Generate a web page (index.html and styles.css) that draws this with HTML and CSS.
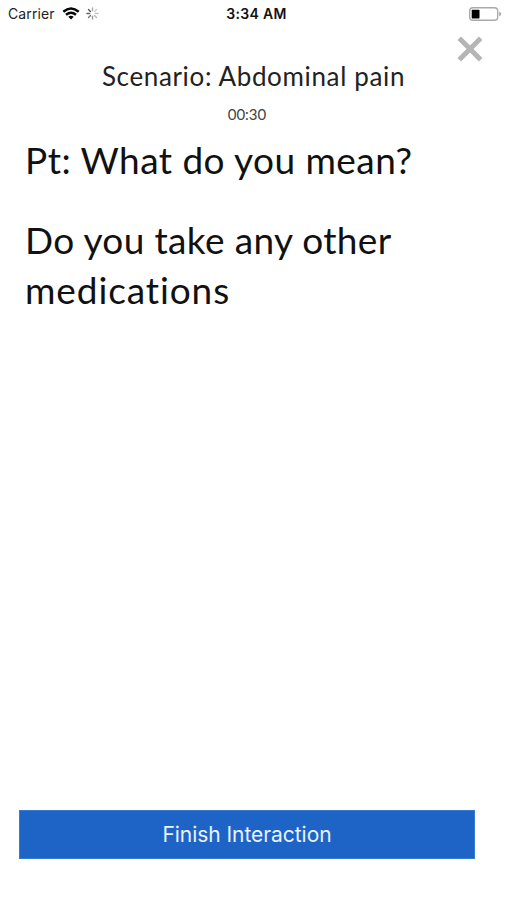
FILE: index.html
```html
<!DOCTYPE html>
<html lang="en">
<head>
<meta charset="utf-8">
<title>Scenario</title>
<link rel="stylesheet" href="styles.css">
</head>
<body>
<div class="screen">
  <header class="status">
    <div class="status-left">
      <span class="carrier">Carrier</span>
      <svg class="wifi" width="18" height="13" viewBox="0 0 18 13" fill="none" stroke="#050505" stroke-width="2.5">
        <path d="M1.3 4.8Q9 -1.8 16.7 4.8"/>
        <path d="M4 7.7Q9 3.7 14 7.7"/>
        <path d="M6.3 9.7Q9 7.6 11.7 9.7L9 12.5Z" fill="#050505" stroke="none"/>
      </svg>
      <svg class="spinner" width="13" height="13" viewBox="-6.5 -6.5 13 13" stroke-width="1.4" stroke-linecap="round">
        <path d="M0-2.8V-5.6" stroke="#aaa"/>
        <path d="M2-2L4-4" stroke="#ccc"/>
        <path d="M2.8 0H5.6" stroke="#c4c4c4"/>
        <path d="M2 2L4 4" stroke="#b5b5b5"/>
        <path d="M0 2.8V5.6" stroke="#999"/>
        <path d="M-2 2L-4 4" stroke="#777"/>
        <path d="M-2.8 0H-5.6" stroke="#666"/>
        <path d="M-2-2L-4-4" stroke="#555"/>
      </svg>
    </div>
    <span class="time">3:34 AM</span>
    <svg class="battery" width="34" height="16" viewBox="0 0 34 16">
      <rect x="1.7" y="1.7" width="28" height="12.6" rx="3.2" fill="#fff" stroke="#aaa" stroke-width="1.4"/>
      <rect x="3.7" y="3.7" width="7.8" height="8.8" rx=".8" fill="#000"/>
      <path d="M31.3 5.8Q33 6.2 33 8T31.3 10.2Z" fill="#999"/>
    </svg>
  </header>
  <div class="close-row">
    <svg width="26" height="26" viewBox="0 0 26 26" stroke="#b5b5b5" stroke-width="5">
      <path d="M2.3 2.3L23.7 23.7M23.7 2.3L2.3 23.7"/>
    </svg>
  </div>
  <h1 class="title">Scenario: Abdominal pain</h1>
  <div class="timer">00:30</div>
  <main class="dialog">
    <p class="reply"><span class="l1">Pt: What do you mean?</span></p>
    <p class="question"><span class="l2">Do you take any other</span><br><span class="l3">medications</span></p>
  </main>
  <button class="finish">Finish Interaction</button>
</div>
</body>
</html>
```
FILE: styles.css
```css
* { box-sizing: border-box; }
body { margin: 0; background: #fff; }
.screen { width: 507px; height: 900px; display: flex; flex-direction: column; overflow: hidden; background: #fff; color: #111; }
.status { height: 27px; display: grid; grid-template-columns: 1fr auto 1fr; align-items: center; padding: 0 5px 0 8px; font-family: Inter, "Liberation Sans", sans-serif; font-size: 14px; }
.status-left { display: flex; align-items: center; }
.carrier { width: 54px; color: #222; letter-spacing: .1px; white-space: nowrap; }
.spinner { margin-left: 6px; }
.time { font-weight: 600; font-size: 14px; letter-spacing: .3px; margin-left: 3px; }
.battery { justify-self: end; }
.close-row { height: 32px; display: flex; justify-content: flex-end; padding: 9px 24px 0 0; }
.title { margin: 0; height: 36px; line-height: 34px; text-align: center; font-family: Lato, sans-serif; font-weight: 400; font-size: 26px; letter-spacing: .65px; white-space: nowrap; color: #222; }
.timer { height: 31px; width: 494px; line-height: 39px; text-align: center; font-family: Lato, sans-serif; font-size: 15px; color: #444; }
.dialog { flex: 1; padding: 9px 24px 0 25px; font-family: Lato, sans-serif; font-size: 37px; line-height: 50px; white-space: nowrap; }
.dialog p { margin: 0; }
.reply { height: 80px; }
.l1 { letter-spacing: .45px; }
.l2 { letter-spacing: .35px; }
.l3 { letter-spacing: .9px; }
.finish { width: 456px; height: 49px; margin: 0 0 41px 19px; padding: 0; border: 1px solid #347bd1; background: #1e64c6; color: #e9f2ff; font-family: Inter, "Liberation Sans", sans-serif; font-size: 21px; letter-spacing: -.05px; line-height: 48px; }
```
